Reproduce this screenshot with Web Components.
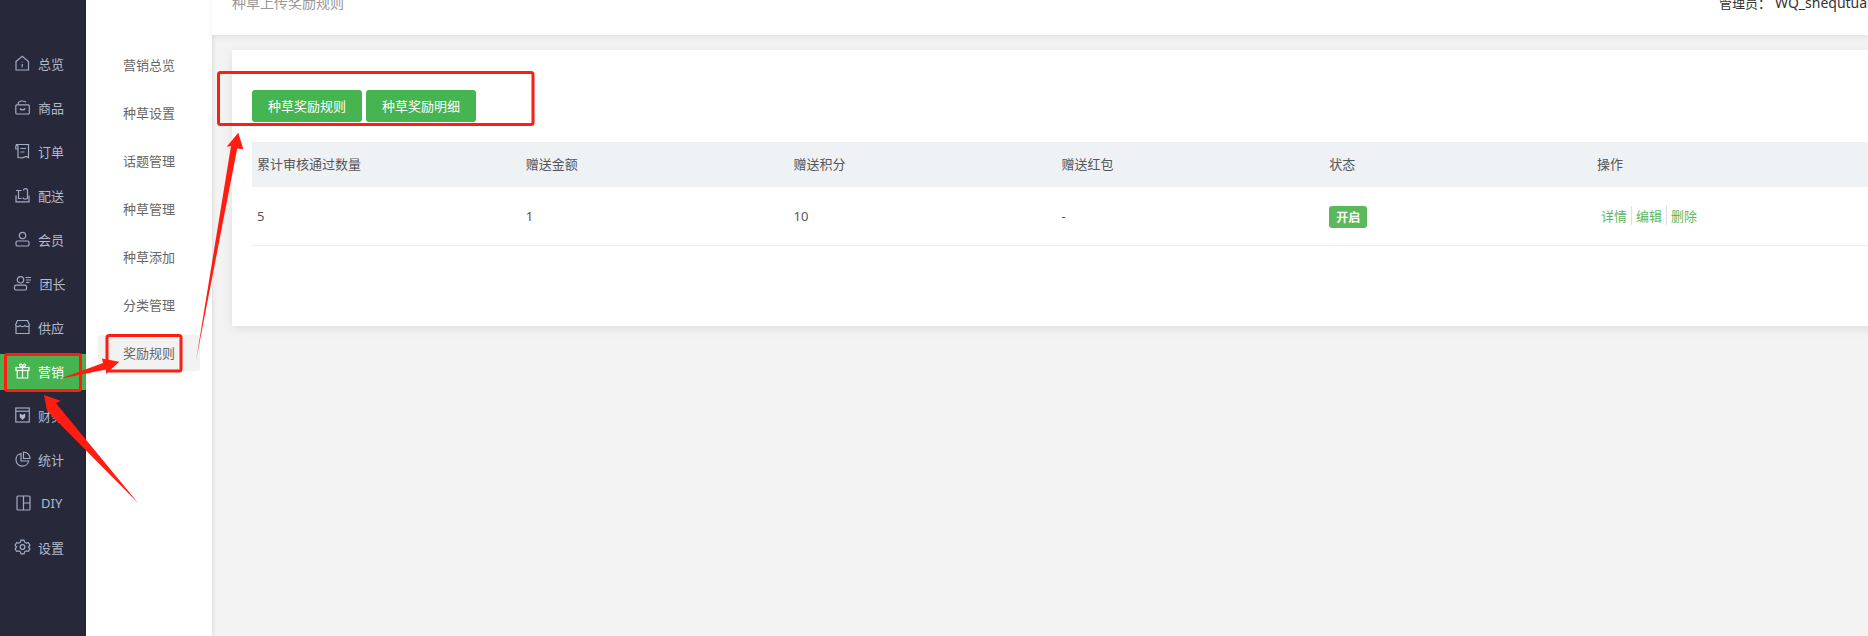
<!DOCTYPE html>
<html lang="zh">
<head>
<meta charset="utf-8">
<title>种草上传奖励规则</title>
<style>
html, body { margin: 0; padding: 0; height: 636px; overflow: hidden; }
body { font-family: "Noto Sans", "Noto Sans CJK SC", sans-serif; font-size: 13px; color: #555; }
svg { display: block; }
</style>
</head>
<body>
<app-shell>
  <side-nav slot="nav">
    <side-item label="总览"><svg viewBox="0 0 20 20"><path d="M3 8.5 9.2 3.2 15.5 8.5V17H3Z"/><path d="M9.2 11v3.2M9.2 8.8v.6"/></svg></side-item>
    <side-item label="商品"><svg viewBox="0 0 20 20"><rect x="2.8" y="7.8" width="13.5" height="9.2" rx="1"/><path d="M5 7.5C5 5 7 4 9 4s3 .4 4 1.2M6.8 11.5c1.5 1.8 4 1.8 5.5 0"/></svg></side-item>
    <side-item label="订单"><svg viewBox="0 0 20 20"><path d="M2.8 3.5H15.5V16.5L13 15.5 9.5 16.8 5 16.5V5.5C5 4 2.8 4 2.8 5.5V8H5"/><path d="M7.5 7.5h5.5M7.5 11h4"/></svg></side-item>
    <side-item label="配送"><svg viewBox="0 0 20 20"><path d="M3 10.5V16.8H16V10.5"/><path d="M3 5.5H8.5M5.5 5.5V13.5H8.5M10.5 5.5C10.5 3 14.5 3 14.5 5.5V12.5C14.5 14.5 10 14.5 10 12.5"/></svg></side-item>
    <side-item label="会员"><svg viewBox="0 0 20 20"><circle cx="9.5" cy="6.5" r="3.2"/><rect x="3" y="12" width="13" height="5" rx="1.6"/></svg></side-item>
    <side-item label="团长" style="--shift:1.5px"><svg viewBox="0 0 20 20" style="overflow:visible"><circle cx="7.5" cy="6.8" r="3.2"/><rect x="1.5" y="12.2" width="12" height="4.8" rx="1.6"/><path d="M12.5 4.5h5.5M13 7h5M13 9.5h3.5"/></svg></side-item>
    <side-item label="供应"><svg viewBox="0 0 20 20"><path d="M3 9V16.5H16V9"/><path d="M4.5 3.5H14.5L16.5 8C15.5 10 13 10 12 8.5 11 10 8 10 7 8.5 6 10 3.5 10 2.5 8Z"/></svg></side-item>
    <side-item label="营销" active><svg viewBox="0 0 20 20"><rect x="3" y="6.5" width="13" height="3"/><path d="M4.2 9.5V17H14.8V9.5M9.5 6.5V17M9.5 6.5C7 6.5 5.5 3 7.5 3S9.5 6.5 9.5 6.5C9.5 6.5 10 3 11.8 3S12 6.5 9.5 6.5"/></svg></side-item>
    <side-item label="财务"><svg viewBox="0 0 20 20"><rect x="2.8" y="3" width="13.5" height="14"/><path d="M3 6.2H16"/><path d="M6.8 8.5 9.5 10 12.2 8.5V12.2L9.5 15 6.8 12.2Z" style="fill:#b4bacd;stroke:none"/></svg></side-item>
    <side-item label="统计"><svg viewBox="0 0 20 20"><path d="M8 4.5A6.4 6.4 0 1 0 15.7 12H8Z"/><path d="M10.5 3V9.5H17A6.5 6.5 0 0 0 10.5 3Z"/></svg></side-item>
    <side-item label="DIY" style="--shift:3px"><svg viewBox="0 0 20 20"><rect x="4" y="3" width="13" height="14" rx="1"/><path d="M10.5 3V17M10.5 10H17"/></svg></side-item>
    <side-item label="设置"><svg viewBox="0 0 20 20"><circle cx="9.5" cy="10" r="2.4"/><path d="M8 3.2H11L11.6 5.2 13.3 6.2 15.4 5.7 16.9 8.2 15.4 10 16.9 11.8 15.4 14.3 13.3 13.8 11.6 14.8 11 16.8H8L7.4 14.8 5.7 13.8 3.6 14.3 2.1 11.8 3.6 10 2.1 8.2 3.6 5.7 5.7 6.2 7.4 5.2Z"/></svg></side-item>
  </side-nav>
  <sub-nav slot="subnav">
    <sub-item>营销总览</sub-item>
    <sub-item>种草设置</sub-item>
    <sub-item>话题管理</sub-item>
    <sub-item>种草管理</sub-item>
    <sub-item>种草添加</sub-item>
    <sub-item>分类管理</sub-item>
    <sub-item active>奖励规则</sub-item>
  </sub-nav>
  <top-bar slot="top" page="种草上传奖励规则" admin="WQ_shequtuan"></top-bar>
  <rule-card>
    <green-btn slot="actions">种草奖励规则</green-btn>
    <green-btn slot="actions">种草奖励明细</green-btn>
    <rule-row head>
      <span>累计审核通过数量</span><span>赠送金额</span><span>赠送积分</span><span>赠送红包</span><span>状态</span><span>操作</span>
    </rule-row>
    <rule-row>
      <span>5</span><span>1</span><span>10</span><span>-</span>
      <span><status-tag>开启</status-tag></span>
      <span><op-links><a>详情</a><a>编辑</a><a>删除</a></op-links></span>
    </rule-row>
  </rule-card>
</app-shell>
<shot-marks></shot-marks>

<script>
class AppShell extends HTMLElement {
  constructor() {
    super();
    this.attachShadow({ mode: 'open' }).innerHTML = `
      <style>
        :host { display: flex; width: 1868px; height: 636px; overflow: hidden; background: #f3f3f3; }
        main { flex: 1; min-width: 0; display: flex; flex-direction: column; }
      </style>
      <slot name="nav"></slot>
      <slot name="subnav"></slot>
      <main><slot name="top"></slot><slot></slot></main>`;
  }
}
customElements.define('app-shell', AppShell);

class SideNav extends HTMLElement {
  constructor() {
    super();
    this.attachShadow({ mode: 'open' }).innerHTML = `
      <style>
        :host { display: flex; flex-direction: column; gap: 8px; flex: none; width: 86px; padding-top: 46px; box-sizing: border-box; background: #27283a; }
      </style>
      <slot></slot>`;
  }
}
customElements.define('side-nav', SideNav);

class SideItem extends HTMLElement {
  constructor() {
    super();
    this.attachShadow({ mode: 'open' }).innerHTML = `
      <style>
        :host { display: flex; align-items: center; height: 36px; padding-left: 13px; color: #b4bacd; }
        :host([active]) { background: #46b450; color: #fff; }
        ::slotted(svg) { width: 20px; height: 20px; flex: none; fill: none; stroke: #a3abc4; stroke-width: 1.2; margin: 0 5px 2px 0; }
        :host([active]) ::slotted(svg) { stroke: #fff; }
        span { margin: 0 0 2px var(--shift, 0); }
      </style>
      <slot></slot><span></span>`;
  }
  connectedCallback() {
    this.shadowRoot.querySelector('span').textContent = this.getAttribute('label');
  }
}
customElements.define('side-item', SideItem);

class SubNav extends HTMLElement {
  constructor() {
    super();
    this.attachShadow({ mode: 'open' }).innerHTML = `
      <style>
        :host { display: flex; flex-direction: column; gap: 12px; flex: none; width: 126px; padding: 47px 12px 0; box-sizing: border-box; background: #fff; box-shadow: 1px 0 4px rgba(0,0,0,.1); position: relative; }
      </style>
      <slot></slot>`;
  }
}
customElements.define('sub-nav', SubNav);

class SubItem extends HTMLElement {
  constructor() {
    super();
    this.attachShadow({ mode: 'open' }).innerHTML = `
      <style>
        :host { display: flex; align-items: center; box-sizing: border-box; height: 36px; padding: 0 0 2px 25px; border-radius: 3px; color: #666; }
        :host([active]) { background: #f2f2f2; }
      </style>
      <slot></slot>`;
  }
}
customElements.define('sub-item', SubItem);

class TopBar extends HTMLElement {
  constructor() {
    super();
    this.attachShadow({ mode: 'open' }).innerHTML = `
      <style>
        :host { display: flex; justify-content: space-between; flex: none; height: 42px; margin-top: -7px; padding: 0 0 0 20px; background: #fff; box-shadow: 0 2px 6px rgba(0,0,0,.07); line-height: 20px; position: relative; }
        .page { font-size: 14px; color: #999; }
        .admin { color: #333; white-space: nowrap; width: 149px; overflow: hidden; }
        .admin b { font-weight: 400; font-size: 14px; margin-left: 4px; }
      </style>
      <div class="page"></div>
      <div class="admin">管理员：<b></b></div>`;
  }
  connectedCallback() {
    this.shadowRoot.querySelector('.page').textContent = this.getAttribute('page');
    this.shadowRoot.querySelector('b').textContent = this.getAttribute('admin');
  }
}
customElements.define('top-bar', TopBar);

class RuleCard extends HTMLElement {
  constructor() {
    super();
    this.attachShadow({ mode: 'open' }).innerHTML = `
      <style>
        :host { display: block; flex: none; box-sizing: border-box; width: 1680px; height: 276px; margin: 15px 0 0 20px; padding: 40px 20px 0; background: #fff; box-shadow: 0 3px 10px rgba(0,0,0,.08); }
        .actions { display: flex; gap: 4px; margin-bottom: 20px; }
      </style>
      <div class="actions"><slot name="actions"></slot></div>
      <slot></slot>`;
  }
}
customElements.define('rule-card', RuleCard);

class GreenBtn extends HTMLElement {
  constructor() {
    super();
    this.attachShadow({ mode: 'open' }).innerHTML = `
      <style>
        :host { display: flex; align-items: center; justify-content: center; box-sizing: border-box; width: 110px; height: 32px; padding-bottom: 2px; border-radius: 3px; background: #46b450; color: #fff; }
      </style>
      <slot></slot>`;
  }
}
customElements.define('green-btn', GreenBtn);

class RuleRow extends HTMLElement {
  constructor() {
    super();
    this.attachShadow({ mode: 'open' }).innerHTML = `
      <style>
        :host { display: grid; grid-template-columns: repeat(5, 267.8px) 1fr; align-items: center; height: 58px; border-bottom: 1px solid #eee; color: #555; }
        :host([head]) { height: 45px; border-bottom: 0; background: #eff2f5; }
        ::slotted(span) { padding: 0 0 0 6px; }
        :host([head]) ::slotted(span) { padding-bottom: 2px; }
        ::slotted(span:first-child) { padding-left: 5px; }
      </style>
      <slot></slot>`;
  }
}
customElements.define('rule-row', RuleRow);

class StatusTag extends HTMLElement {
  constructor() {
    super();
    this.attachShadow({ mode: 'open' }).innerHTML = `
      <style>
        :host { display: flex; align-items: center; justify-content: center; width: 38px; height: 22px; margin-top: 1px; border-radius: 3px; background: #5cb85c; color: #fff; font-size: 12px; font-weight: 700; }
      </style>
      <slot></slot>`;
  }
}
customElements.define('status-tag', StatusTag);

class OpLinks extends HTMLElement {
  constructor() {
    super();
    this.attachShadow({ mode: 'open' }).innerHTML = `
      <style>
        :host { display: flex; align-items: center; padding-left: 4px; height: 18px; margin-bottom: 1px; color: #5cb85c; }
        ::slotted(a) { padding-right: 4px; margin-right: 4px; border-right: 1px solid #ddd; }
        ::slotted(a:last-child) { border-right: 0; }
      </style>
      <slot></slot>`;
  }
}
customElements.define('op-links', OpLinks);

// red markup drawn over the screenshot
class ShotMarks extends HTMLElement {
  constructor() {
    super();
    this.attachShadow({ mode: 'open' }).innerHTML = `
      <style>
        :host { position: absolute; left: 0; top: 0; width: 1868px; height: 636px; pointer-events: none; }
        svg { display: block; }
        rect { fill: none; stroke: #ff1c10; stroke-width: 3; }
        polygon { fill: #ff1c10; }
      </style>
      <svg width="1868" height="636" viewBox="0 0 1868 636">
        <rect x="5.5" y="354.5" width="75" height="36" rx="2"/>
        <rect x="107" y="335.5" width="74" height="35.5" rx="2"/>
        <rect x="218.5" y="72.5" width="314.5" height="52" rx="2"/>
        <polygon points="44,395 60.7,400.7 56,403.3 138.3,503.3 50,414 46.7,409.3"/>
        <polygon points="59.3,379 103,363 102,358.5 119.3,361.7 106,374 106,369.5"/>
        <polygon points="238.3,132.7 243.3,149.3 237.2,148.5 196,360.7 231,146 226.7,146.7"/>
      </svg>`;
  }
}
customElements.define('shot-marks', ShotMarks);
</script>
</body>
</html>
